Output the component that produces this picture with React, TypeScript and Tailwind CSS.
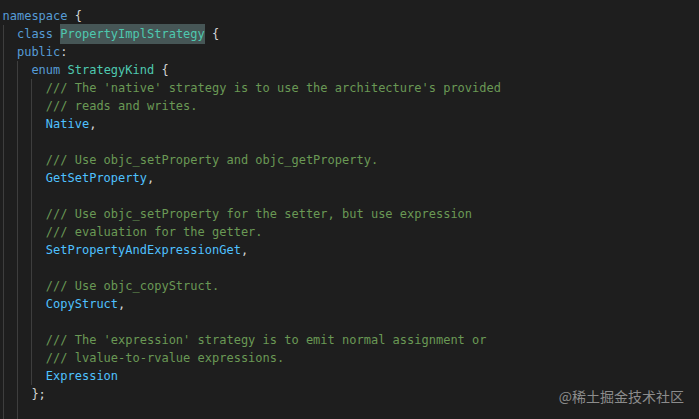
type Tok = { t: string; c?: string; hl?: boolean };
type Line = { g: number; toks: Tok[] };

const KW = 'text-[#569cd6]';
const TY = 'text-[#4ec9b0]';
const CM = 'text-[#6a9955]';
const EN = 'text-[#4fc1ff]';
const PN = 'text-[#d4d4d4]';

const c = (t: string): Tok[] => [{ t, c: CM }];

const lines: Line[] = [
  { g: 0, toks: [{ t: 'namespace', c: KW }, { t: ' {', c: PN }] },
  {
    g: 1,
    toks: [
      { t: 'class', c: KW },
      { t: ' ' },
      { t: 'PropertyImplStrategy', c: TY, hl: true },
      { t: ' {', c: PN },
    ],
  },
  { g: 1, toks: [{ t: 'public', c: KW }, { t: ':', c: PN }] },
  { g: 2, toks: [{ t: 'enum', c: KW }, { t: ' ' }, { t: 'StrategyKind', c: TY }, { t: ' {', c: PN }] },
  { g: 3, toks: c("/// The 'native' strategy is to use the architecture's provided") },
  { g: 3, toks: c('/// reads and writes.') },
  { g: 3, toks: [{ t: 'Native', c: EN }, { t: ',', c: PN }] },
  { g: 3, toks: [] },
  { g: 3, toks: c('/// Use objc_setProperty and objc_getProperty.') },
  { g: 3, toks: [{ t: 'GetSetProperty', c: EN }, { t: ',', c: PN }] },
  { g: 3, toks: [] },
  { g: 3, toks: c('/// Use objc_setProperty for the setter, but use expression') },
  { g: 3, toks: c('/// evaluation for the getter.') },
  { g: 3, toks: [{ t: 'SetPropertyAndExpressionGet', c: EN }, { t: ',', c: PN }] },
  { g: 3, toks: [] },
  { g: 3, toks: c('/// Use objc_copyStruct.') },
  { g: 3, toks: [{ t: 'CopyStruct', c: EN }, { t: ',', c: PN }] },
  { g: 3, toks: [] },
  { g: 3, toks: c("/// The 'expression' strategy is to emit normal assignment or") },
  { g: 3, toks: c('/// lvalue-to-rvalue expressions.') },
  { g: 3, toks: [{ t: 'Expression', c: EN }] },
  { g: 2, toks: [{ t: '};', c: PN }] },
  { g: 2, toks: [] },
];

function CodeLine({ line }: { line: Line }) {
  const guides = Array.from({ length: line.g });
  return (
    <div className="flex h-[18px] items-stretch whitespace-pre">
      {guides.map((_, i) => (
        <span key={i} className="w-[2ch] shrink-0 border-l border-[#3e3e3e]" />
      ))}
      <span className="flex items-center">
        {line.toks.map((tok, i) => (
          <span
            key={i}
            className={`${tok.c ?? PN} ${tok.hl ? 'bg-[#465656] py-px' : ''}`}
          >
            {tok.t}
          </span>
        ))}
      </span>
    </div>
  );
}

export default function App() {
  return (
    <div className="relative h-[419px] w-[699px] overflow-hidden bg-[#1e1e1e]">
      <div
        className="pl-[2.5px] pt-[7px] text-[12px] leading-[18px]"
        style={{ fontFamily: '"DejaVu Sans Mono", monospace' }}
      >
        {lines.map((line, i) => (
          <CodeLine key={i} line={line} />
        ))}
      </div>
      <div
        className="absolute right-[15px] bottom-[12px] text-[14px] text-[#8c8c8c]"
        style={{ fontFamily: '"Noto Sans CJK SC", sans-serif' }}
      >
        @稀土掘金技术社区
      </div>
    </div>
  );
}
